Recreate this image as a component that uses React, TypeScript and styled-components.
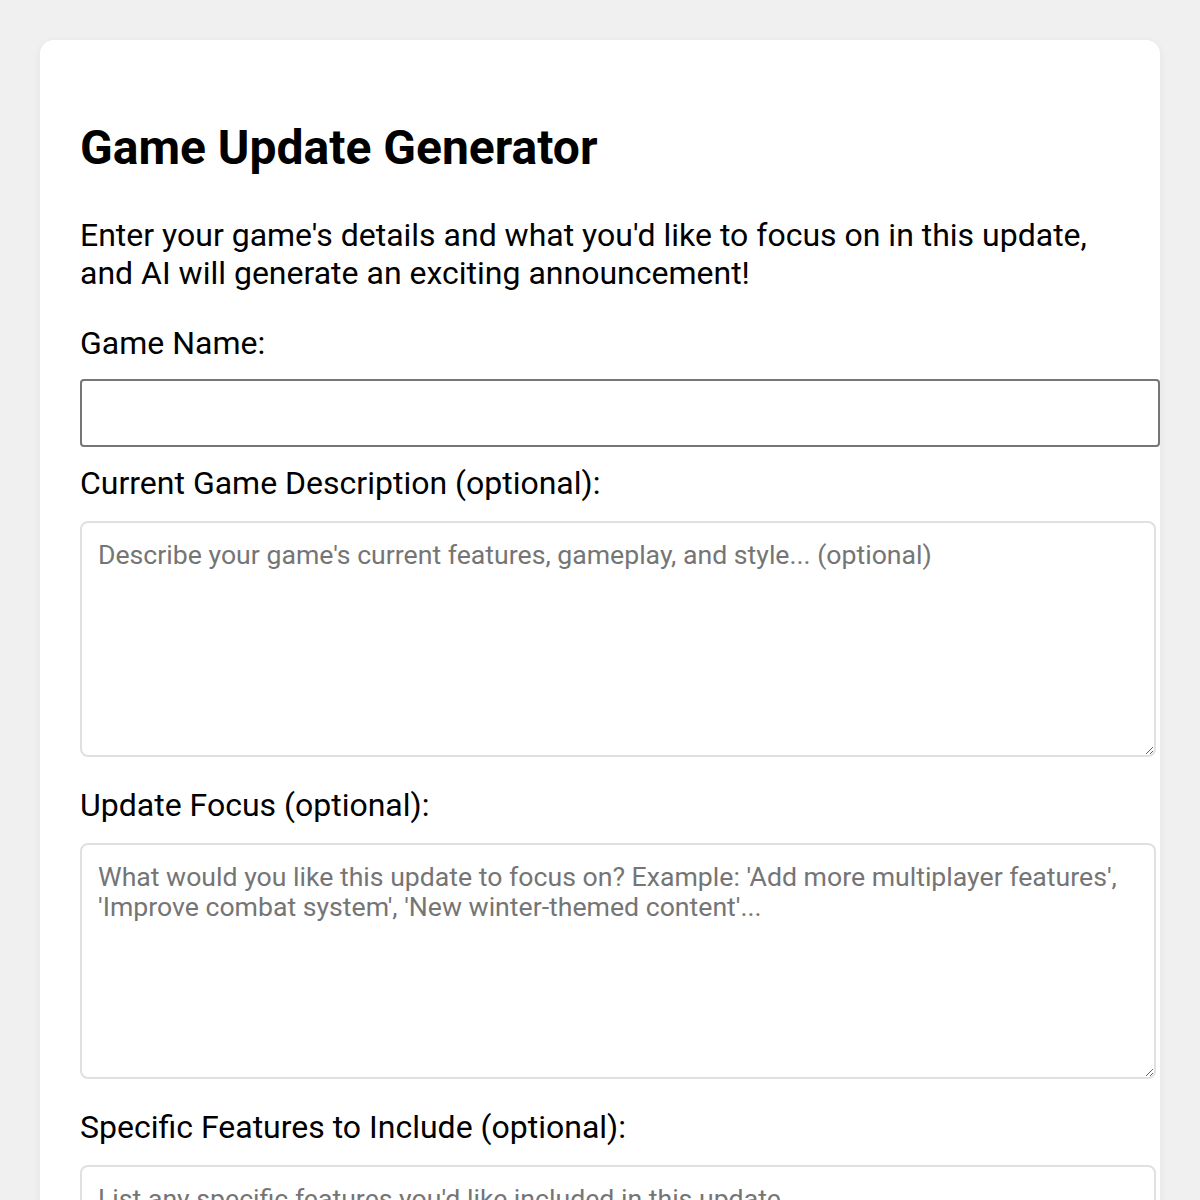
import React from "react";
import styled, { createGlobalStyle } from "styled-components";

const Global = createGlobalStyle`
  html, body { margin: 0; padding: 0; background: #f0f0f0; }
  body { font-family: Roboto, "Liberation Sans", Arial, sans-serif; }
  * { box-sizing: border-box; }
`;

const Page = styled.div`
  padding: 40px 40px 0 40px;
`;

const Card = styled.div`
  background: #fff;
  border-radius: 14px;
  box-shadow: 0 2px 8px rgba(0, 0, 0, 0.06);
  padding: 82px 40px 40px 40px;
  width: 1120px;
`;

const Title = styled.h1`
  margin: 0;
  font-size: 48px;
  line-height: 52px;
  font-weight: 700;
  color: #000;
`;

const Intro = styled.p`
  margin: 42px 0 0 0;
  font-size: 32px;
  line-height: 38px;
  color: #000;
`;

const Label = styled.label<{ $top: number }>`
  display: block;
  margin-top: ${(p) => p.$top}px;
  font-size: 32px;
  line-height: 34px;
  color: #000;
`;

const TextInput = styled.input`
  display: block;
  margin-top: 19px;
  width: calc(100% + 40px);
  height: 68px;
  border: 2px solid #767676;
  border-radius: 4px;
  padding: 0 18px;
  font-family: inherit;
  font-size: 26.6px;
  background: #fff;
  outline: none;
`;

const TextArea = styled.textarea`
  display: block;
  margin-top: 21px;
  width: calc(100% + 36px);
  height: 236px;
  border: 2px solid #e0e0e0;
  border-radius: 8px;
  padding: 17px 16px;
  font-family: inherit;
  font-size: 26.65px;
  line-height: 30px;
  color: #000;
  background: #fff;
  outline: none;
  resize: vertical;
  &::placeholder {
    color: #757575;
  }
`;

export default function App() {
  return (
    <>
      <Global />
      <Page>
        <Card>
          <Title>Game Update Generator</Title>
          <Intro>
            Enter your game's details and what you'd like to focus on in this update,
            <br />
            and AI will generate an exciting announcement!
          </Intro>
          <Label $top={34}>Game Name:</Label>
          <TextInput type="text" />
          <Label $top={19}>Current Game Description (optional):</Label>
          <TextArea placeholder="Describe your game's current features, gameplay, and style... (optional)" />
          <Label $top={31}>Update Focus (optional):</Label>
          <TextArea placeholder="What would you like this update to focus on? Example: 'Add more multiplayer features', 'Improve combat system', 'New winter-themed content'..." />
          <Label $top={31}>Specific Features to Include (optional):</Label>
          <TextArea placeholder="List any specific features you'd like included in this update..." />
        </Card>
      </Page>
    </>
  );
}
